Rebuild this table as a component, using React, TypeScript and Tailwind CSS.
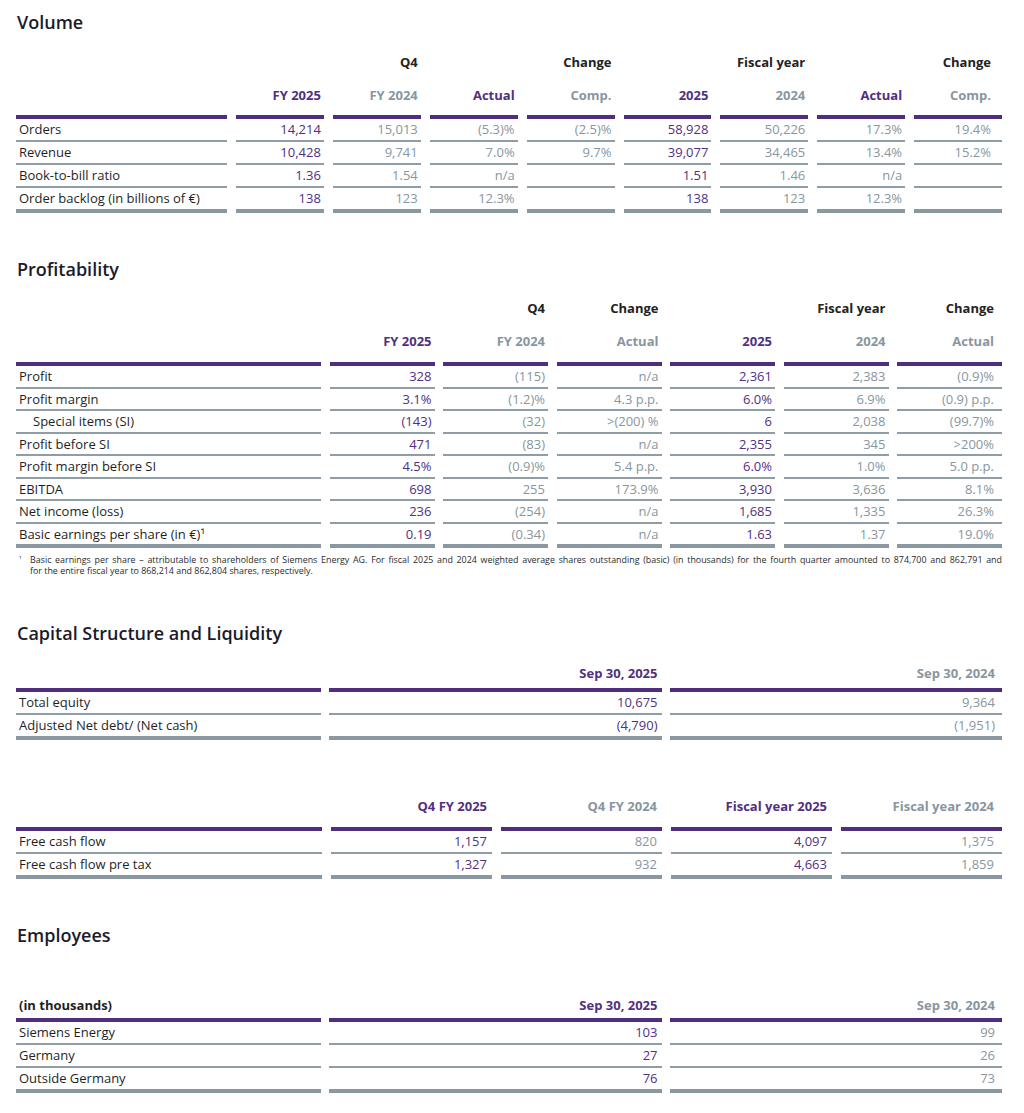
type Tone = 'purple' | 'gray';

type Column = {
  head: string;
  headTone: Tone;
  tone: Tone;
  group?: string;
};

type Row = {
  label: string;
  indent?: boolean;
  values: string[];
};

type TableProps = {
  grid: string;
  columns: Column[];
  rows: Row[];
  labelHead?: string;
  groupRow?: boolean;
  headPad: string;
  pad: string;
  lastPad: string;
  rowLeading: string;
};

const toneText = (t: Tone) => (t === 'purple' ? 'text-[#51307f]' : 'text-[#8896a0]');

function DataTable({ grid, columns, rows, labelHead, groupRow, headPad, pad, lastPad, rowLeading }: TableProps) {
  return (
    <div className={`grid w-[986px] ${grid}`}>
      {/* gruppen-kopf (Q4 / Change / Fiscal year) */}
      {groupRow && (
        <>
          <div className="h-[33px]" />
          {columns.map((c, i) => (
            <div
              key={`g${i}`}
              className={`h-[33px] text-right text-[13px] font-bold leading-[20px] text-[#222] ${i === columns.length - 1 ? lastPad : pad}`}
            >
              {c.group ?? ''}
            </div>
          ))}
        </>
      )}

      {/* spalten-kopf */}
      <div className={`border-b-4 border-[#4f2d7f] pl-[3px] text-[13px] font-bold leading-[20px] text-[#1f1f1f] ${headPad}`}>
        {labelHead ?? ''}
      </div>
      {columns.map((c, i) => (
        <div
          key={`h${i}`}
          className={`border-b-4 border-[#4f2d7f] text-right text-[13px] font-bold leading-[20px] ${toneText(c.headTone)} ${headPad} ${i === columns.length - 1 ? lastPad : pad}`}
        >
          {c.head}
        </div>
      ))}

      {/* zeilen */}
      {rows.map((r, ri) => {
        const last = ri === rows.length - 1;
        const border = last ? 'border-b-4 border-[#8a98a2]' : 'border-b-2 border-[#8f9da7]';
        return (
          <div key={`r${ri}`} className="contents">
            <div className={`${border} ${rowLeading} text-[13px] text-[#1f1f1f] whitespace-nowrap ${r.indent ? 'pl-[17px]' : 'pl-[3px]'}`}>
              {r.label}
            </div>
            {columns.map((c, ci) => (
              <div
                key={`c${ci}`}
                className={`${border} ${rowLeading} text-right text-[13px] whitespace-nowrap ${toneText(c.tone)} ${ci === columns.length - 1 ? lastPad : pad}`}
              >
                {r.values[ci] ?? ''}
              </div>
            ))}
          </div>
        );
      })}
    </div>
  );
}

const volumeCols: Column[] = [
  { head: 'FY 2025', headTone: 'purple', tone: 'purple' },
  { head: 'FY 2024', headTone: 'gray', tone: 'gray', group: 'Q4' },
  { head: 'Actual', headTone: 'purple', tone: 'gray' },
  { head: 'Comp.', headTone: 'gray', tone: 'gray', group: 'Change' },
  { head: '2025', headTone: 'purple', tone: 'purple' },
  { head: '2024', headTone: 'gray', tone: 'gray', group: 'Fiscal year' },
  { head: 'Actual', headTone: 'purple', tone: 'gray' },
  { head: 'Comp.', headTone: 'gray', tone: 'gray', group: 'Change' },
];

const volumeRows: Row[] = [
  { label: 'Orders', values: ['14,214', '15,013', '(5.3)%', '(2.5)%', '58,928', '50,226', '17.3%', '19.4%'] },
  { label: 'Revenue', values: ['10,428', '9,741', '7.0%', '9.7%', '39,077', '34,465', '13.4%', '15.2%'] },
  { label: 'Book-to-bill ratio', values: ['1.36', '1.54', 'n/a', '', '1.51', '1.46', 'n/a', ''] },
  { label: 'Order backlog (in billions of €)', values: ['138', '123', '12.3%', '', '138', '123', '12.3%', ''] },
];

const profitCols: Column[] = [
  { head: 'FY 2025', headTone: 'purple', tone: 'purple' },
  { head: 'FY 2024', headTone: 'gray', tone: 'gray', group: 'Q4' },
  { head: 'Actual', headTone: 'gray', tone: 'gray', group: 'Change' },
  { head: '2025', headTone: 'purple', tone: 'purple' },
  { head: '2024', headTone: 'gray', tone: 'gray', group: 'Fiscal year' },
  { head: 'Actual', headTone: 'gray', tone: 'gray', group: 'Change' },
];

const profitRows: Row[] = [
  { label: 'Profit', values: ['328', '(115)', 'n/a', '2,361', '2,383', '(0.9)%'] },
  { label: 'Profit margin', values: ['3.1%', '(1.2)%', '4.3 p.p.', '6.0%', '6.9%', '(0.9) p.p.'] },
  { label: 'Special items (SI)', indent: true, values: ['(143)', '(32)', '>(200) %', '6', '2,038', '(99.7)%'] },
  { label: 'Profit before SI', values: ['471', '(83)', 'n/a', '2,355', '345', '>200%'] },
  { label: 'Profit margin before SI', values: ['4.5%', '(0.9)%', '5.4 p.p.', '6.0%', '1.0%', '5.0 p.p.'] },
  { label: 'EBITDA', values: ['698', '255', '173.9%', '3,930', '3,636', '8.1%'] },
  { label: 'Net income (loss)', values: ['236', '(254)', 'n/a', '1,685', '1,335', '26.3%'] },
  { label: 'Basic earnings per share (in €)¹', values: ['0.19', '(0.34)', 'n/a', '1.63', '1.37', '19.0%'] },
];

const capitalCols: Column[] = [
  { head: 'Sep 30, 2025', headTone: 'purple', tone: 'purple' },
  { head: 'Sep 30, 2024', headTone: 'gray', tone: 'gray' },
];

const capitalRows: Row[] = [
  { label: 'Total equity', values: ['10,675', '9,364'] },
  { label: 'Adjusted Net debt/ (Net cash)', values: ['(4,790)', '(1,951)'] },
];

const cashCols: Column[] = [
  { head: 'Q4 FY 2025', headTone: 'purple', tone: 'purple' },
  { head: 'Q4 FY 2024', headTone: 'gray', tone: 'gray' },
  { head: 'Fiscal year 2025', headTone: 'purple', tone: 'purple' },
  { head: 'Fiscal year 2024', headTone: 'gray', tone: 'gray' },
];

const cashRows: Row[] = [
  { label: 'Free cash flow', values: ['1,157', '820', '4,097', '1,375'] },
  { label: 'Free cash flow pre tax', values: ['1,327', '932', '4,663', '1,859'] },
];

const employeeRows: Row[] = [
  { label: 'Siemens Energy', values: ['103', '99'] },
  { label: 'Germany', values: ['27', '26'] },
  { label: 'Outside Germany', values: ['76', '73'] },
];

function Title({ children, className }: { children: string; className: string }) {
  return (
    <h2 className={`h-[28px] pl-[17px] text-[18px] font-semibold leading-[28px] text-[#1b1b2c] ${className}`}>
      {children}
    </h2>
  );
}

export default function App() {
  return (
    <div className="min-h-[1113px] w-[1024px] bg-white font-['Open_Sans',_'Noto_Sans',_sans-serif]">
      <div className="flex flex-col">
        {/* Volume */}
        <Title className="mt-[8px]">Volume</Title>
        <div className="ml-[16px] mt-[16px]">
          <DataTable
            grid="grid-cols-[211px_repeat(8,1fr)] gap-x-[9px]"
            columns={volumeCols}
            rows={volumeRows}
            groupRow
            headPad="pb-[10px]"
            pad="pr-[3px]"
            lastPad="pr-[11px]"
            rowLeading="leading-[21px]"
          />
        </div>

        {/* Profitability */}
        <Title className="mt-[42px]">Profitability</Title>
        <div className="ml-[16px] mt-[15px]">
          <DataTable
            grid="grid-cols-[305px_repeat(6,1fr)] gap-x-[8.5px]"
            columns={profitCols}
            rows={profitRows}
            groupRow
            headPad="pb-[11px]"
            pad="pr-[3px]"
            lastPad="pr-[8px]"
            rowLeading="leading-[20.5px]"
          />
          <div className="mt-[6px] flex text-[8.9px] leading-[11px] text-[#2a2a2a]">
            <span className="w-[14px] shrink-0 pl-[3px] text-[7px]">¹</span>
            <div className="w-[972px]">
              <div className="text-justify [text-align-last:justify]">
                Basic earnings per share – attributable to shareholders of Siemens Energy AG. For fiscal 2025 and 2024 weighted average shares outstanding (basic) (in thousands) for the fourth quarter amounted to 874,700 and 862,791 and
              </div>
              <div>for the entire fiscal year to 868,214 and 862,804 shares, respectively.</div>
            </div>
          </div>
        </div>

        {/* Capital Structure and Liquidity */}
        <Title className="mt-[43px]">Capital Structure and Liquidity</Title>
        <div className="ml-[16px] mt-[16px]">
          <DataTable
            grid="grid-cols-[305px_1fr_1fr] gap-x-[8px]"
            columns={capitalCols}
            rows={capitalRows}
            headPad="pb-[5px]"
            pad="pr-[4px]"
            lastPad="pr-[7px]"
            rowLeading="leading-[21px]"
          />
        </div>
        <div className="ml-[16px] mt-[56px]">
          <DataTable
            grid="grid-cols-[306px_repeat(4,1fr)] gap-x-[8.5px]"
            columns={cashCols}
            rows={cashRows}
            headPad="pb-[11px]"
            pad="pr-[5px]"
            lastPad="pr-[8px]"
            rowLeading="leading-[21px]"
          />
        </div>

        {/* Employees */}
        <Title className="mt-[42px]">Employees</Title>
        <div className="ml-[16px] mt-[46px]">
          <DataTable
            grid="grid-cols-[305px_1fr_1fr] gap-x-[8px]"
            columns={capitalCols}
            rows={employeeRows}
            labelHead="(in thousands)"
            headPad="pb-[3px]"
            pad="pr-[4px]"
            lastPad="pr-[7px]"
            rowLeading="leading-[21px]"
          />
        </div>
      </div>
    </div>
  );
}
